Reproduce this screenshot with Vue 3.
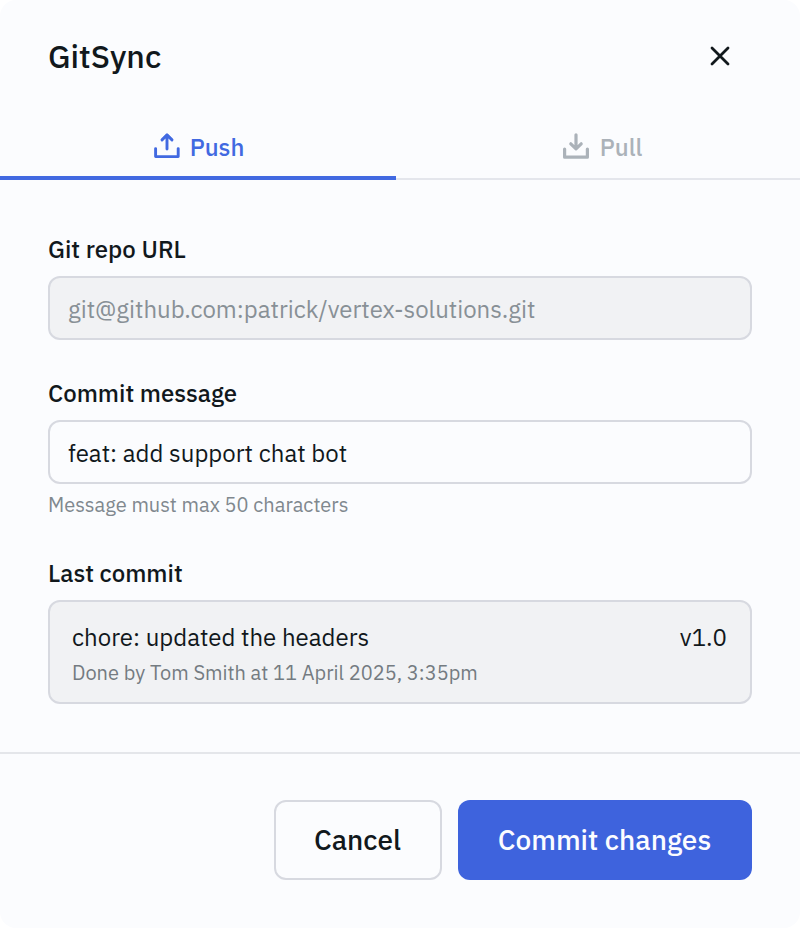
<script setup>
import { ref } from 'vue'

const activeTab = ref('push')
const repoUrl = 'git@github.com:patrick/vertex-solutions.git'
const message = ref('feat: add support chat bot')
const lastCommit = {
  message: 'chore: updated the headers',
  version: 'v1.0',
  details: 'Done by Tom Smith at 11 April 2025, 3:35pm',
}
</script>

<template>
  <section class="dialog" role="dialog" aria-labelledby="dialog-title">
    <header class="header">
      <h1 id="dialog-title" class="title">GitSync</h1>
      <button class="close" type="button">
        <svg width="24" height="24" viewBox="0 0 24 24" fill="none" stroke="currentColor" stroke-width="2.8" stroke-linecap="round">
          <path d="M4 4L20 20M20 4L4 20" />
        </svg>
      </button>
    </header>

    <nav class="tabs">
      <button type="button" class="tab" :class="{ active: activeTab === 'push' }" @click="activeTab = 'push'">
        <svg class="tab-icon" width="28" height="28" viewBox="0 0 28 28" fill="none" stroke="currentColor" stroke-width="2.9" stroke-linecap="round" stroke-linejoin="round">
          <path d="M2.6 16.6V24.6H25.2V16.6" />
          <path d="M14 17V3M9 7.9L14 2.9L19 7.9" />
        </svg>
        <span>Push</span>
      </button>
      <button type="button" class="tab" :class="{ active: activeTab === 'pull' }" @click="activeTab = 'pull'">
        <svg class="tab-icon" width="28" height="28" viewBox="0 0 28 28" fill="none" stroke="currentColor" stroke-width="3.2" stroke-linecap="round" stroke-linejoin="round">
          <path d="M2.6 17V25.2H25.4V17" />
          <path d="M14 2.8V16.8M8.8 11.8L14 16.8L19.2 11.8" />
        </svg>
        <span>Pull</span>
      </button>
    </nav>

    <main class="body">
      <div class="group">
        <label class="label" for="repo">Git repo URL</label>
        <input id="repo" class="input locked" :value="repoUrl" readonly />
      </div>
      <div class="group message">
        <label class="label" for="message">Commit message</label>
        <input id="message" v-model="message" class="input" />
        <p class="hint">Message must max 50 characters</p>
      </div>
      <div class="group last">
        <h2 class="label">Last commit</h2>
        <div class="card">
          <div class="card-row">
            <span>{{ lastCommit.message }}</span>
            <span>{{ lastCommit.version }}</span>
          </div>
          <p class="details">{{ lastCommit.details }}</p>
        </div>
      </div>
    </main>

    <footer class="footer">
      <button class="button secondary" type="button">Cancel</button>
      <button class="button primary" type="button">Commit changes</button>
    </footer>
  </section>
</template>

<style>
body {
  margin: 0;
  background: #ffffff;
}
</style>

<style scoped>
.dialog,
.dialog * {
  box-sizing: border-box;
}
.dialog {
  display: flex;
  flex-direction: column;
  width: 800px;
  height: 928px;
  border-radius: 16px;
  overflow: hidden;
  background: #fbfcfe;
  color: #11181c;
  font-family: "IBM Plex Sans", "Open Sans", sans-serif;
  font-size: 24px;
  line-height: 32px;
}
h1, h2, p {
  margin: 0;
}
button, input {
  font: inherit;
  color: inherit;
}
.header {
  display: flex;
  align-items: center;
  justify-content: space-between;
  height: 118px;
  padding: 0 68px 6px 48px;
}
.title {
  font-size: 32px;
  font-weight: 500;
  line-height: 42px;
}
.close {
  display: flex;
  padding: 0;
  border: 0;
  background: none;
}
.tabs {
  display: grid;
  grid-template-columns: 396px 396px;
  gap: 8px;
  height: 62px;
  box-shadow: inset 0 -2px #e4e6ec;
}
.tab {
  display: flex;
  align-items: center;
  justify-content: center;
  gap: 9px;
  padding: 0 0 0 1px;
  border: 0;
  border-bottom: 4px solid transparent;
  background: none;
  color: #abb2b9;
  font-weight: 500;
}
.tab + .tab {
  gap: 10px;
  padding-left: 0;
}
.tab.active {
  color: #4169e1;
  border-bottom-color: #4169e1;
}
.tab-icon {
  margin-bottom: 2px;
}
.body {
  height: 572px;
  padding: 53px 48px 0;
}
.group {
  display: flex;
  flex-direction: column;
}
.message {
  margin-top: 37px;
}
.last {
  margin-top: 39px;
}
.label {
  margin-bottom: 11px;
  font-size: 24px;
  font-weight: 500;
}
.input {
  width: 100%;
  height: 64px;
  padding: 2px 18px 0;
  border: 2px solid #d7d9e0;
  border-radius: 12px;
  outline: none;
  background: transparent;
}
.locked {
  background: #f1f2f4;
  color: #889096;
}
.hint,
.details {
  font-size: 20px;
}
.hint {
  margin-top: 8px;
  line-height: 26px;
  color: #80888e;
}
.card {
  height: 104px;
  padding: 19px 23px 0 22px;
  border: 2px solid #d7d9e0;
  border-radius: 12px;
  background: #f1f2f4;
}
.card-row {
  display: flex;
  justify-content: space-between;
}
.details {
  margin-top: 6px;
  line-height: 28px;
  color: #747b81;
}
.footer {
  display: flex;
  justify-content: flex-end;
  gap: 16px;
  padding: 46px 48px;
  border-top: 2px solid #e4e6ea;
}
.button {
  height: 80px;
  padding: 0;
  border-radius: 12px;
  font-size: 28px;
  font-weight: 500;
}
.secondary {
  width: 168px;
  padding-right: 1px;
  border: 2px solid #d7d9e0;
  background: transparent;
}
.primary {
  width: 294px;
  padding-right: 1px;
  border: 0;
  background: #3e63dd;
  color: #fbfcff;
}
</style>
